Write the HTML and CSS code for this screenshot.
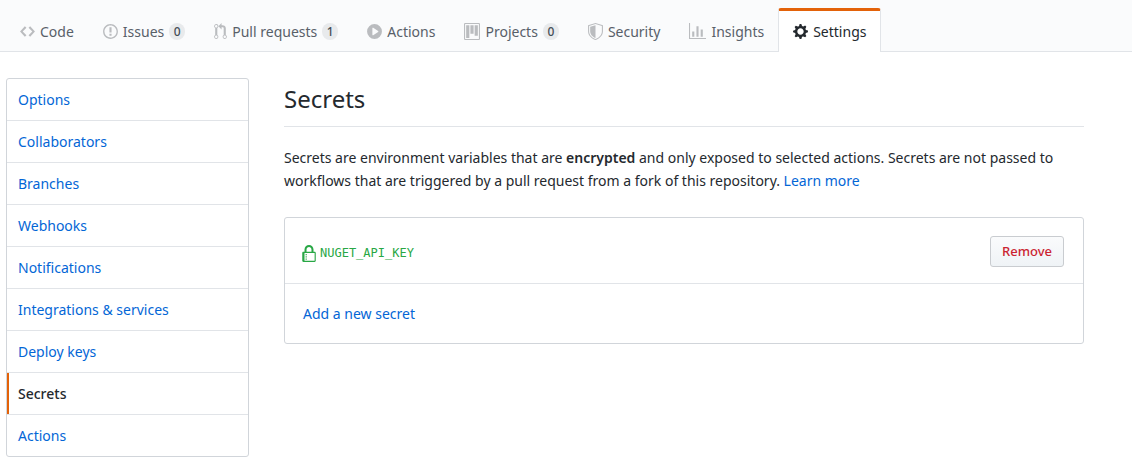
FILE: index.html
```html
<!DOCTYPE html>
<html lang="en">
<head>
<meta charset="utf-8">
<title>Secrets</title>
<link rel="stylesheet" href="styles.css">
</head>
<body>
<nav class="tabs" aria-label="Repository">
  <a class="tab" href="#code"><svg class="icon" width="15" height="17" viewBox="0 0 14 16"><path d="M9.5 3L8 4.5 11.5 8 8 11.5 9.5 13 14 8 9.5 3zm-5 0L0 8l4.5 5L6 11.5 2.5 8 6 4.5 4.5 3z"/></svg><span>Code</span></a>
  <a class="tab" href="#issues"><svg class="icon" width="15" height="17" viewBox="0 0 14 16"><path fill-rule="evenodd" d="M7 2.3c3.14 0 5.7 2.56 5.7 5.7s-2.56 5.7-5.7 5.7A5.71 5.71 0 0 1 1.3 8c0-3.14 2.56-5.7 5.7-5.7zM7 1C3.14 1 0 4.14 0 8s3.14 7 7 7 7-3.14 7-7-3.14-7-7-7zm1 3H6v5h2V4zm0 6H6v2h2v-2z"/></svg><span>Issues</span><span class="count">0</span></a>
  <a class="tab" href="#pulls"><svg class="icon" width="13" height="17" viewBox="0 0 12 16"><path fill-rule="evenodd" d="M11 11.28V5c-.03-.78-.34-1.47-.94-2.06C9.46 2.35 8.78 2.03 8 2H7V0L4 3l3 3V4h1c.27.02.48.11.69.31.21.2.3.42.31.69v6.28A1.993 1.993 0 0 0 10 15a1.993 1.993 0 0 0 1-3.72zm-1 2.92c-.66 0-1.2-.55-1.2-1.2 0-.65.55-1.2 1.2-1.2.65 0 1.2.55 1.2 1.2 0 .65-.55 1.2-1.2 1.2zM4 3c0-1.11-.89-2-2-2a1.993 1.993 0 0 0-1 3.72v6.56A1.993 1.993 0 0 0 2 15a1.993 1.993 0 0 0 1-3.72V4.72c.59-.34 1-.98 1-1.72zm-.8 10c0 .66-.55 1.2-1.2 1.2-.65 0-1.2-.55-1.2-1.2 0-.65.55-1.2 1.2-1.2.65 0 1.2.55 1.2 1.2zM2 4.2C1.34 4.2.8 3.65.8 3c0-.65.55-1.2 1.2-1.2.65 0 1.2.55 1.2 1.2 0 .65-.55 1.2-1.2 1.2z"/></svg><span>Pull requests</span><span class="count">1</span></a>
  <a class="tab" href="#actions"><svg class="icon" width="15" height="17" viewBox="0 0 14 16"><path fill-rule="evenodd" d="M14 8A7 7 0 1 1 0 8a7 7 0 0 1 14 0zm-8.223 3.482l4.599-3.066a.5.5 0 0 0 0-.832L5.777 4.518A.5.5 0 0 0 5 4.934v6.132a.5.5 0 0 0 .777.416z"/></svg><span>Actions</span></a>
  <a class="tab" href="#projects"><svg class="icon" width="16" height="17" viewBox="0 0 15 16"><path fill-rule="evenodd" d="M10 12h3V2h-3v10zm-4-2h3V2H6v8zm-4 4h3V2H2v12zm-1 1h13V1H1v14zM14 0H1a1 1 0 0 0-1 1v14a1 1 0 0 0 1 1h13a1 1 0 0 0 1-1V1a1 1 0 0 0-1-1z"/></svg><span>Projects</span><span class="count">0</span></a>
  <a class="tab" href="#security"><svg class="icon" width="15" height="17" viewBox="0 0 14 16"><path fill-rule="evenodd" d="M0 2l7-2 7 2v6.02C14 12.69 8.69 16 7 16c-1.69 0-7-3.31-7-7.98V2zm1 .75L7 1l6 1.75v5.268C13 12.104 8.449 15 7 15c-1.449 0-6-2.896-6-6.982V2.75zm1 .75L7 2v12c-1.207 0-5-2.482-5-5.985V3.5z"/></svg><span>Security</span></a>
  <a class="tab" href="#insights"><svg class="icon" width="17" height="17" viewBox="0 0 16 16"><path d="M16 14v1H0V0h1v14h15zM5 13H3V8h2v5zm4 0H7V3h2v10zm4 0h-2V6h2v7z"/></svg><span>Insights</span></a>
  <a class="tab tab-selected" href="#settings" aria-current="page"><svg class="icon" width="15" height="17" viewBox="0 0 14 16"><path fill-rule="evenodd" d="M14 8.77v-1.6l-1.94-.64-.45-1.09.88-1.84-1.13-1.13-1.81.91-1.09-.45-.69-1.92h-1.6l-.63 1.94-1.11.45-1.84-.88-1.13 1.13.91 1.81-.45 1.09L0 7.23v1.59l1.94.64.45 1.09-.88 1.84 1.13 1.13 1.81-.91 1.09.45.69 1.92h1.59l.63-1.94 1.11-.45 1.84.88 1.13-1.13-.92-1.81.47-1.09L14 8.75v.02zM7 11c-1.66 0-3-1.34-3-3s1.34-3 3-3 3 1.34 3 3-1.34 3-3 3z"/></svg><span>Settings</span></a>
</nav>
<div class="layout">
  <nav class="menu" aria-label="Settings">
    <a class="menu-item" href="#options">Options</a>
    <a class="menu-item" href="#collaborators">Collaborators</a>
    <a class="menu-item" href="#branches">Branches</a>
    <a class="menu-item" href="#webhooks">Webhooks</a>
    <a class="menu-item" href="#notifications">Notifications</a>
    <a class="menu-item" href="#integrations">Integrations &amp; services</a>
    <a class="menu-item" href="#keys">Deploy keys</a>
    <a class="menu-item menu-selected" href="#secrets" aria-current="page">Secrets</a>
    <a class="menu-item" href="#repo-actions">Actions</a>
  </nav>
  <main class="content">
    <h1 class="title">Secrets</h1>
    <p class="intro">Secrets are environment variables that are <strong>encrypted</strong> and only exposed to selected actions. Secrets are not passed to workflows that are triggered by a pull request from a fork of this repository. <a class="link" href="#learn">Learn more</a></p>
    <section class="box">
      <div class="row secret">
        <div class="key">
          <svg class="lock" width="14" height="18" viewBox="0 0 12 16"><path fill-rule="evenodd" d="M4 13H3v-1h1v1zm8-6v7c0 .55-.45 1-1 1H1c-.55 0-1-.45-1-1V7c0-.55.45-1 1-1h1V4c0-2.2 1.8-4 4-4s4 1.8 4 4v2h1c.55 0 1 .45 1 1zM3.8 6h4.41V4c0-1.22-.98-2.2-2.2-2.2-1.22 0-2.2.98-2.2 2.2v2H3.8zM11 7H2v7h9V7zM4 8H3v1h1V8zm0 2H3v1h1v-1z"/></svg>
          <code class="name">NUGET_API_KEY</code>
        </div>
        <button class="remove" type="button">Remove</button>
      </div>
      <div class="row"><a class="link" href="#new">Add a new secret</a></div>
    </section>
  </main>
</div>
</body>
</html>
```
FILE: styles.css
```css
* { box-sizing: border-box; }

body {
  margin: 0;
  background: #fff;
  color: #24292e;
  font: 14px/23px "Noto Sans", sans-serif;
}

a { text-decoration: none; }

.tabs {
  display: flex;
  align-items: flex-end;
  padding: 8px 5px 0;
  background: #fafbfc;
  box-shadow: inset 0 -1px #e1e4e8;
}

.tab {
  display: flex;
  align-items: center;
  gap: 5px;
  height: 44px;
  padding: 0 14px;
  border: 1px solid transparent;
  border-top-width: 3px;
  border-bottom: 0;
  border-radius: 3px 3px 0 0;
  color: #586069;
  white-space: nowrap;
}

.tab + .tab { margin-left: -1px; }

.icon {
  flex: none;
  fill: #babcbf;
}

.count {
  min-width: 16px;
  padding: 0 4px;
  border-radius: 9px;
  background: #e8eaec;
  color: #444d56;
  font-size: 12px;
  font-weight: 500;
  line-height: 17px;
  text-align: center;
}

.tab-selected {
  border-color: #e36209 #e1e4e8 transparent;
  background: #fff;
  color: #24292e;
}

.tab-selected .icon { fill: #24292e; }

.layout {
  display: grid;
  grid-template-columns: 243px minmax(0, 1fr);
  gap: 35px;
  align-items: start;
  padding: 26px 48px 10px 6px;
}

.menu {
  border: 1px solid #d1d5da;
  border-radius: 3px;
}

.menu-item {
  display: block;
  padding: 10px 11px 9px;
  border-bottom: 1px solid #e1e4e8;
  color: #0366d6;
  line-height: 22px;
}

.menu-item:last-child { border-bottom: 0; }

.menu-selected {
  box-shadow: inset 2px 0 #e36209;
  color: #24292e;
  font-weight: 500;
}

.title {
  margin: 0 0 19px;
  padding: 4px 0 10px;
  border-bottom: 1px solid #e1e4e8;
  font-size: 24px;
  font-weight: 400;
  line-height: 34px;
}

.intro { margin: 0 0 25px; }

.intro strong { font-weight: 600; }

.link { color: #0366d6; }

.box {
  border: 1px solid #d1d5da;
  border-radius: 3px;
}

.row {
  display: flex;
  align-items: center;
  padding: 18px;
}

.secret {
  justify-content: space-between;
  padding: 18px 19px 16px 17px;
  border-bottom: 1px solid #e1e4e8;
}

.key {
  display: flex;
  align-items: center;
  gap: 4px;
  padding-top: 4px;
}

.lock { fill: #28a745; }

.name {
  color: #28a745;
  font-family: "DejaVu Sans Mono", monospace;
  font-size: 12px;
}

.remove {
  padding: 4px 11px;
  border: 1px solid #c9ccd0;
  border-radius: 3px;
  background: linear-gradient(#fafbfc, #eff3f6);
  color: #cb2431;
  font: 500 13px/21px "Noto Sans", sans-serif;
}
```
